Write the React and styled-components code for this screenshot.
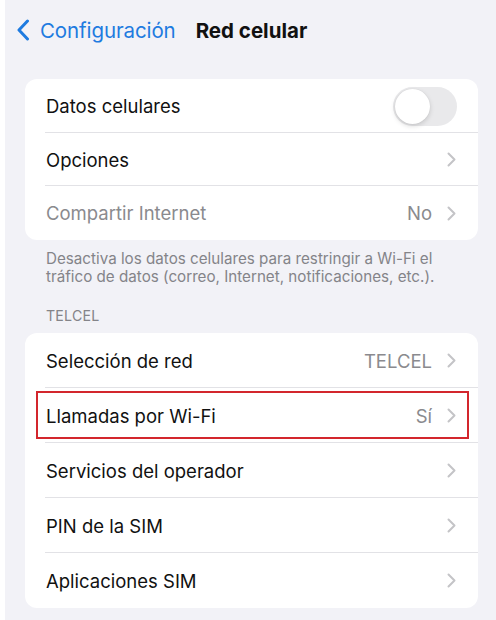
import React from 'react';
import styled, { createGlobalStyle } from 'styled-components';

const GlobalStyle = createGlobalStyle`
    body {
        margin: 0;
        background: #ffffff;
        font-family: "Inter", "Noto Sans", sans-serif;
        -webkit-font-smoothing: antialiased;
    }
`

const Screen = styled.div`
    margin-left: 5px;
    min-height: 620px;
    background: #f2f2f7;
    padding: 0 18px 12px 20px;
    box-sizing: border-box;
`

const NavBar = styled.div`
    display: flex;
    align-items: center;
    height: 60px;
    margin-left: -9px;
`

const BackLink = styled.div`
    display: flex;
    align-items: center;
    gap: 10px;
    color: #1e7be0;
    font-size: 20.5px;
    letter-spacing: -0.1px;
`

const Title = styled.div`
    margin-left: 20px;
    font-size: 20.5px;
    font-weight: 700;
    color: #111;
`

const Card = styled.div`
    background: #ffffff;
    border-radius: 12px;
    margin-top: ${p => p.top || 0}px;
    overflow: hidden;
`

const Row = styled.div`
    position: relative;
    display: flex;
    align-items: center;
    height: ${p => p.h}px;
    padding: 0 22px 0 21px;
    &:not(:last-child)::after {
        content: '';
        position: absolute;
        left: 20px;
        right: 0;
        bottom: 0;
        height: 1px;
        background: #e2e2e6;
    }
`

const Label = styled.div`
    flex: 1;
    font-size: 18.5px;
    color: ${p => p.muted ? '#8a8a8e' : '#111'};
`

const Value = styled.div`
    font-size: 18.5px;
    color: #8a8a8e;
    margin-right: 15px;
`

const Toggle = styled.div`
    width: 64px;
    height: 39px;
    border-radius: 20px;
    background: #e9e9eb;
    margin-right: -1px;
    display: flex;
    align-items: center;
    padding: 2px;
    box-sizing: border-box;
`

const Knob = styled.div`
    width: 35px;
    height: 35px;
    border-radius: 50%;
    background: #ffffff;
    box-shadow: 0 2px 5px rgba(0, 0, 0, 0.15), 0 0 1px rgba(0, 0, 0, 0.1);
`

const Highlight = styled.div`
    position: absolute;
    left: 11px;
    right: 9px;
    top: 3px;
    bottom: 4px;
    border: 2px solid #d3262d;
    pointer-events: none;
`

const Footnote = styled.div`
    padding: 10px 0 0 21px;
    font-size: 15.2px;
    line-height: 17.5px;
    color: #848489;
`

const SectionHeader = styled.div`
    padding: 22px 0 0 21px;
    font-size: 14.2px;
    color: #848489;
    letter-spacing: 0.2px;
`

const BackChevron = () => (
    <svg width="14" height="22" viewBox="0 0 14 22">
        <path d="M11.5 2 L3 11 L11.5 20" fill="none" stroke="#1e7be0" strokeWidth="3" strokeLinecap="round" strokeLinejoin="round" />
    </svg>
)

const Chevron = () => (
    <svg width="9" height="15" viewBox="0 0 9 15">
        <path d="M1.5 1.5 L7.5 7.5 L1.5 13.5" fill="none" stroke="#c4c4c7" strokeWidth="2" strokeLinecap="round" strokeLinejoin="round" />
    </svg>
)

const operatorRows = [
    { label: 'Selección de red', value: 'TELCEL' },
    { label: 'Llamadas por Wi-Fi', value: 'Sí', marked: true },
    { label: 'Servicios del operador' },
    { label: 'PIN de la SIM' },
    { label: 'Aplicaciones SIM' },
]

const App = () => {
    return (
        <>
            <GlobalStyle />
            <Screen>
                <NavBar>
                    <BackLink>
                        <BackChevron />
                        Configuración
                    </BackLink>
                    <Title>Red celular</Title>
                </NavBar>

                <Card top={19}>
                    <Row h={54}>
                        <Label>Datos celulares</Label>
                        <Toggle><Knob /></Toggle>
                    </Row>
                    <Row h={53}>
                        <Label>Opciones</Label>
                        <Chevron />
                    </Row>
                    <Row h={54}>
                        <Label muted>Compartir Internet</Label>
                        <Value>No</Value>
                        <Chevron />
                    </Row>
                </Card>

                <Footnote>
                    Desactiva los datos celulares para restringir a Wi-Fi el<br />
                    tráfico de datos (correo, Internet, notificaciones, etc.).
                </Footnote>
                <SectionHeader>TELCEL</SectionHeader>

                <Card top={9}>
                    {operatorRows.map(row => (
                        <Row h={55} key={row.label}>
                            <Label>{row.label}</Label>
                            {row.value && <Value>{row.value}</Value>}
                            <Chevron />
                            {row.marked && <Highlight />}
                        </Row>
                    ))}
                </Card>
            </Screen>
        </>
    )
}

export default App;
